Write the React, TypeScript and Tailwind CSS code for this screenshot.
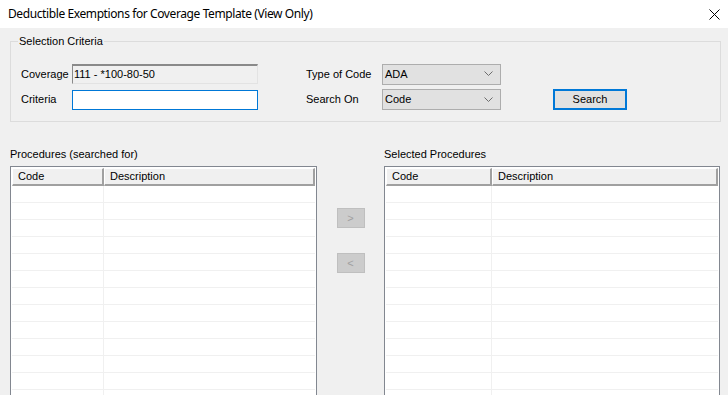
import React from "react";

const Chevron = () => (
  <svg width="9" height="6" viewBox="0 0 9 6" className="shrink-0">
    <path d="M0.5 0.5 L4.5 4.5 L8.5 0.5" fill="none" stroke="#6d6d6d" strokeWidth="1" />
  </svg>
);

function Select({ value }: { value: string }) {
  return (
    <div className="flex h-[21px] w-[119px] shrink-0 items-center justify-between border border-[#adadad] bg-[#e1e1e1] pl-[2px] pr-[7px] text-black">
      <span>{value}</span>
      <Chevron />
    </div>
  );
}

function Grid({ codeW }: { codeW: number }) {
  const rows = Array.from({ length: 13 });
  return (
    <div className="flex-1 overflow-hidden border border-[#828790] bg-white p-[1px]">
      <div className="flex h-[18px] bg-[#f0f0f0]">
        <div
          className="flex items-center border-b-2 border-r-2 border-[#a0a0a0] border-t border-l border-t-white border-l-white pl-[5px]"
          style={{ width: codeW }}
        >
          Code
        </div>
        <div className="flex flex-1 items-center border-b-2 border-r-2 border-[#a0a0a0] border-t border-l border-t-white border-l-white pl-[5px]">
          Description
        </div>
      </div>
      {rows.map((_, i) => (
        <div key={i} className="flex h-[17px] border-b border-[#f0f0f0]">
          <div className="border-r border-[#f0f0f0]" style={{ width: codeW }} />
          <div className="flex-1" />
        </div>
      ))}
    </div>
  );
}

export default function App() {
  return (
    <div
      className="h-[395px] w-[728px] overflow-hidden bg-[#f0f0f0] text-[11px] text-black"
      style={{ fontFamily: '"Liberation Sans", Arial, sans-serif' }}
    >
      {/* Title bar */}
      <div className="flex h-[28px] items-center justify-between bg-white pl-[8px] pr-[8px]">
        <span
          className="text-[12px] tracking-[-0.4px]"
          style={{ fontFamily: '"Noto Sans", "Liberation Sans", sans-serif' }}
        >
          Deductible Exemptions for Coverage Template (View Only)
        </span>
        <svg width="11" height="11" viewBox="0 0 11 11">
          <path d="M0.5 0.5 L10.5 10.5 M10.5 0.5 L0.5 10.5" stroke="#000" strokeWidth="1" />
        </svg>
      </div>

      <div className="w-[728px] px-[10px]">
        {/* Group box */}
        <div className="relative mt-[13px] h-[81px] w-[711px] border border-[#dcdcdc] pl-[10px] pt-[22px]">
          <span className="absolute left-[7px] top-[-8px] bg-[#f0f0f0] px-[1px] leading-[14px]">
            Selection Criteria
          </span>
          <div className="flex h-[20px] items-center">
            <span className="w-[51px] shrink-0 overflow-hidden whitespace-nowrap">Coverage</span>
            <div className="flex h-[20px] w-[186px] shrink-0 items-center border-l border-t-2 border-r border-b border-l-[#8a8a8a] border-t-[#8a8a8a] border-r-[#e3e3e3] border-b-[#e3e3e3] bg-[#f0f0f0] pl-[1px]">
              111 - *100-80-50
            </div>
            <span className="ml-[48px] w-[76px] shrink-0">Type of Code</span>
            <Select value="ADA" />
          </div>
          <div className="mt-[5px] flex h-[21px] items-center">
            <span className="w-[51px] shrink-0">Criteria</span>
            <div className="h-[20px] w-[186px] shrink-0 border border-[#0078d7] bg-white" />
            <span className="ml-[48px] w-[76px] shrink-0">Search On</span>
            <Select value="Code" />
            <div className="ml-[52px] flex h-[21px] w-[74px] shrink-0 items-center justify-center border-2 border-[#0078d7] bg-[#e1e1e1]">
              Search
            </div>
          </div>
        </div>

        {/* Lists */}
        <div className="mt-[25px] flex w-[710px]">
          <div className="flex w-[307px] shrink-0 flex-col">
            <div className="mb-[6px] h-[13px] leading-[15px]">Procedures (searched for)</div>
            <div className="flex h-[260px]">
              <Grid codeW={92} />
            </div>
          </div>
          <div className="flex w-[67px] shrink-0 flex-col items-center pt-[61px]">
            <div className="flex h-[20px] w-[28px] items-center justify-center border border-[#bfbfbf] bg-[#cccccc] text-[#a0a0a0]">
              &gt;
            </div>
            <div className="mt-[25px] flex h-[20px] w-[28px] items-center justify-center border border-[#bfbfbf] bg-[#cccccc] text-[#a0a0a0]">
              &lt;
            </div>
          </div>
          <div className="flex w-[336px] shrink-0 flex-col">
            <div className="mb-[6px] h-[13px] leading-[15px]">Selected Procedures</div>
            <div className="flex h-[260px]">
              <Grid codeW={106} />
            </div>
          </div>
        </div>
      </div>
    </div>
  );
}
